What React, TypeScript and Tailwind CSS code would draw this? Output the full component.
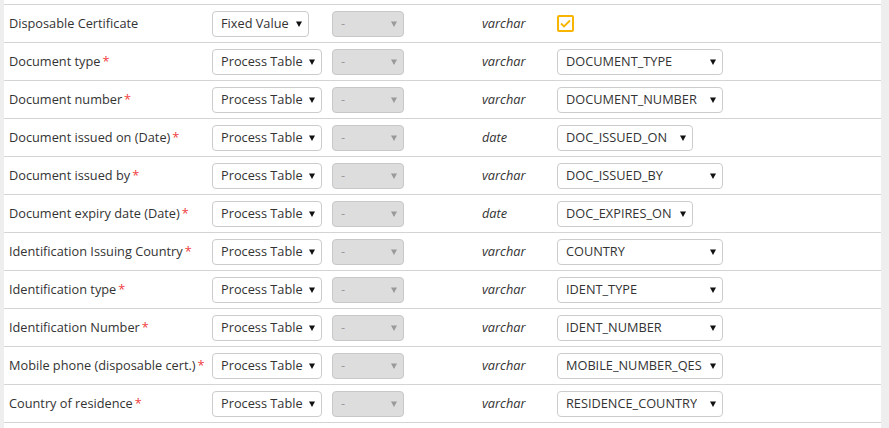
const rows: {
  label: string;
  required: boolean;
  source: string;
  type: string;
  column?: string;
  width?: number;
}[] = [
  { label: 'Disposable Certificate', required: false, source: 'Fixed Value', type: 'varchar' },
  { label: 'Document type', required: true, source: 'Process Table', type: 'varchar', column: 'DOCUMENT_TYPE', width: 166 },
  { label: 'Document number', required: true, source: 'Process Table', type: 'varchar', column: 'DOCUMENT_NUMBER', width: 166 },
  { label: 'Document issued on (Date)', required: true, source: 'Process Table', type: 'date', column: 'DOC_ISSUED_ON', width: 136 },
  { label: 'Document issued by', required: true, source: 'Process Table', type: 'varchar', column: 'DOC_ISSUED_BY', width: 166 },
  { label: 'Document expiry date (Date)', required: true, source: 'Process Table', type: 'date', column: 'DOC_EXPIRES_ON', width: 136 },
  { label: 'Identification Issuing Country', required: true, source: 'Process Table', type: 'varchar', column: 'COUNTRY', width: 166 },
  { label: 'Identification type', required: true, source: 'Process Table', type: 'varchar', column: 'IDENT_TYPE', width: 166 },
  { label: 'Identification Number', required: true, source: 'Process Table', type: 'varchar', column: 'IDENT_NUMBER', width: 166 },
  { label: 'Mobile phone (disposable cert.)', required: true, source: 'Process Table', type: 'varchar', column: 'MOBILE_NUMBER_QES', width: 166 },
  { label: 'Country of residence', required: true, source: 'Process Table', type: 'varchar', column: 'RESIDENCE_COUNTRY', width: 166 },
];

function Arrow({ muted }: { muted?: boolean }) {
  return (
    <svg width="6" height="6" viewBox="0 0 6 6" className="shrink-0">
      <path d="M0 0.5h6L3 6z" fill={muted ? '#9a9a9a' : '#111'} />
    </svg>
  );
}

function FakeSelect({ value, width, disabled }: { value: string; width: number; disabled?: boolean }) {
  return (
    <div
      className={
        disabled
          ? 'flex h-[26px] items-center justify-between rounded-[4px] border border-[#c8c8c8] bg-[#dddddd] pl-[8px] pr-[6px] text-[#999]'
          : 'flex h-[26px] items-center justify-between rounded-[4px] border border-[#cccccc] bg-white pl-[8px] pr-[6px] text-[#333]'
      }
      style={{ width }}
    >
      <span className="truncate whitespace-nowrap">{value}</span>
      <Arrow muted={disabled} />
    </div>
  );
}

function Checkbox() {
  return (
    <div className="flex h-[17px] w-[17px] items-center justify-center rounded-[2px] border-2 border-[#f7b500]">
      <svg width="11" height="9" viewBox="0 0 11 9">
        <path d="M1 4.5l3 3L10 1.5" fill="none" stroke="#f7b500" strokeWidth="1.8" />
      </svg>
    </div>
  );
}

export default function App() {
  return (
    <div
      className="flex h-[428px] w-[889px] overflow-hidden bg-white text-[12.75px] text-[#333]"
      style={{ fontFamily: '"Open Sans", "Noto Sans", Arial, sans-serif' }}
    >
      <div className="w-[4px] bg-[#eeeeee]" />
      <div className="flex-1 pt-[4px]">
        <div className="border-b border-[#d4d4d4]">
          {rows.map((r) => (
            <div
              key={r.label}
              className="grid h-[38px] grid-cols-[203px_120px_150px_75px_1fr] items-center border-t border-[#d4d4d4] pl-[5px]"
            >
              <div className="whitespace-nowrap">
                {r.label}
                {r.required && <span className="ml-[2px] text-[#f04040]">*</span>}
              </div>
              <FakeSelect value={r.source} width={r.source === 'Fixed Value' ? 97 : 110} />
              <FakeSelect value="-" width={72} disabled />
              <div className="italic">{r.type}</div>
              <div>{r.column ? <FakeSelect value={r.column} width={r.width ?? 166} /> : <Checkbox />}</div>
            </div>
          ))}
        </div>
      </div>
      <div className="w-[8px] bg-[#eeeeee]" />
    </div>
  );
}
